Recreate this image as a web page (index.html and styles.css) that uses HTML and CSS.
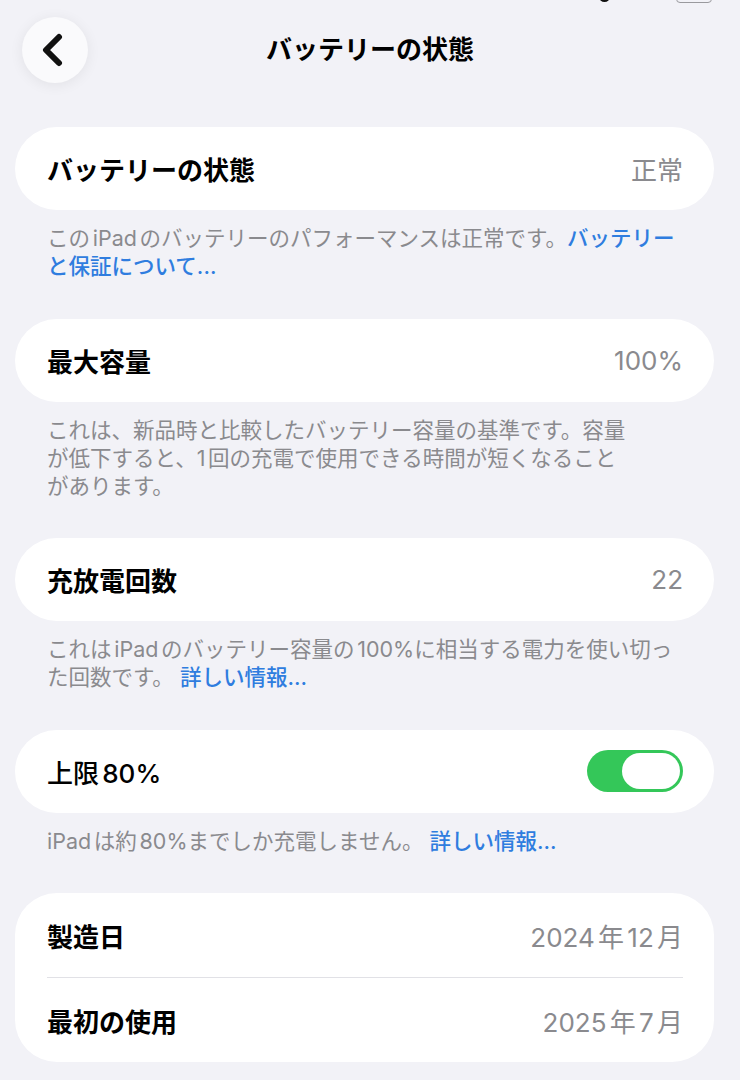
FILE: index.html
```
<!DOCTYPE html>
<html lang="ja">
<head>
    <meta charset="UTF-8">
    <meta name="viewport" content="width=device-width, initial-scale=1.0">
    <title>バッテリーの状態</title>
    <link rel="stylesheet" href="styles.css">
</head>
<body>
    <!-- Barra de estado (casi fuera de la pantalla) -->
    <div class="status">
        <span class="dot"></span>
        <span class="battery"></span>
    </div>

    <header class="nav">
        <button class="back" aria-label="戻る">
            <svg width="24" height="34" viewBox="0 0 24 34">
                <path d="M18 4 L5 17 L18 30" fill="none" stroke="#111" stroke-width="6" stroke-linecap="round" stroke-linejoin="round"/>
            </svg>
        </button>
        <h1>バッテリーの状態</h1>
        <span></span>
    </header>

    <main class="list">
        <section class="group">
            <div class="card">
                <div class="row"><span class="label">バッテリーの状態</span><span class="value">正常</span></div>
            </div>
            <p class="note">このiPadのバッテリーのパフォーマンスは正常です。<a href="#">バッテリー<br>と保証について...</a></p>
        </section>

        <section class="group">
            <div class="card">
                <div class="row"><span class="label">最大容量</span><span class="value">100%</span></div>
            </div>
            <p class="note">これは、新品時と比較したバッテリー容量の基準です。容量<br>が低下すると、1回の充電で使用できる時間が短くなること<br>があります。</p>
        </section>

        <section class="group">
            <div class="card">
                <div class="row"><span class="label">充放電回数</span><span class="value">22</span></div>
            </div>
            <p class="note">これはiPadのバッテリー容量の100%に相当する電力を使い切っ<br>た回数です。 <a href="#">詳しい情報...</a></p>
        </section>

        <section class="group">
            <div class="card">
                <div class="row">
                    <span class="label light">上限80%</span>
                    <span class="toggle on"><span class="knob"></span></span>
                </div>
            </div>
            <p class="note">iPadは約80%までしか充電しません。 <a href="#">詳しい情報...</a></p>
        </section>

        <section class="group">
            <div class="card double">
                <div class="row"><span class="label">製造日</span><span class="value">2024年12月</span></div>
                <div class="row"><span class="label">最初の使用</span><span class="value">2025年7月</span></div>
            </div>
        </section>
    </main>
</body>
</html>
```

FILE: styles.css
```
body {
    font-family: Inter, "Noto Sans CJK JP", sans-serif;
    margin: 0;
    padding: 0;
    background-color: #f2f2f7;
    color: #000;
    width: 740px;
    height: 1080px;
    overflow: hidden;
    position: relative;
    text-autospace: normal;
}

.status {
    position: absolute;
    top: -11px;
    right: 28px;
    display: flex;
    align-items: center;
    gap: 66px;
}

.status .dot {
    width: 11px;
    height: 11px;
    border-radius: 50%;
    background-color: #111;
}

.status .battery {
    width: 34px;
    height: 12px;
    border: 1.5px solid #9a9a9e;
    border-radius: 4px;
}

.nav {
    display: grid;
    grid-template-columns: 66px 1fr 66px;
    align-items: center;
    padding: 17px 22px 0;
    height: 110px;
    align-content: start;
}

.back {
    width: 66px;
    height: 66px;
    border: none;
    border-radius: 50%;
    background-color: #fafafc;
    box-shadow: 0 2px 14px rgba(0, 0, 0, 0.07);
    display: flex;
    align-items: center;
    justify-content: center;
    padding: 0 4px 0 0;
    cursor: pointer;
}

.nav h1 {
    margin: 0;
    text-align: center;
    font-size: 26px;
    font-weight: 700;
    line-height: 66px;
}

.list {
    padding: 0 26px 0 15px;
}

.card {
    background-color: #fff;
    border-radius: 42px;
    padding: 0 31px 0 32px;
}

.card.double {
    padding-top: 1px;
}

.row {
    display: flex;
    align-items: center;
    justify-content: space-between;
    height: 83px;
    font-size: 26px;
}

.card .row + .row {
    border-top: 1px solid #e1e1e6;
    height: 84px;
}

.label {
    font-weight: 700;
}

.label.light {
    font-weight: 500;
}

.value {
    color: #8a8a8e;
}

.toggle {
    width: 96px;
    height: 42px;
    border-radius: 21px;
    background-color: #34c759;
    display: flex;
    align-items: center;
    justify-content: flex-end;
    padding: 0 3px;
    box-sizing: border-box;
}

.knob {
    width: 58px;
    height: 36px;
    border-radius: 18px;
    background-color: #fff;
}

.note {
    margin: 14px 0 38.5px;
    padding: 0 32px;
    font-size: 21.5px;
    line-height: 28px;
    color: #8a8a8e;
    white-space: nowrap;
}

.note a {
    color: #2f7ddf;
    text-decoration: none;
    font-weight: 500;
}
```
